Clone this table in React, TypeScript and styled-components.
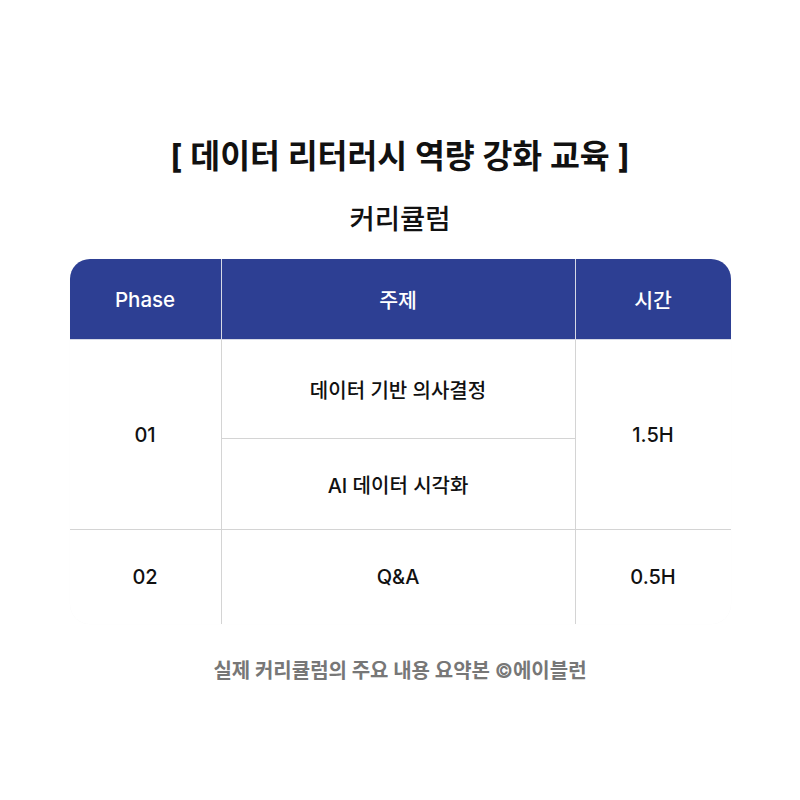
import React from 'react'
import styled, { createGlobalStyle } from 'styled-components'

const GlobalStyle = createGlobalStyle`
  html, body {
    margin: 0;
    padding: 0;
    background: #ffffff;
  }
  body {
    font-family: Inter, "Noto Sans CJK KR", sans-serif;
    color: #111;
  }
`

const Page = styled.div`
  width: 800px;
  height: 800px;
  display: flex;
  flex-direction: column;
  align-items: center;
  padding-top: 134px;
  box-sizing: border-box;
`

const Title = styled.h1`
  margin: 0;
  font-size: 32.5px;
  font-weight: 700;
  line-height: 46px;
  color: #111;
`

const Subtitle = styled.h2`
  margin: 20px 0 0;
  font-size: 27.5px;
  font-weight: 500;
  line-height: 38px;
  color: #111;
`

const Table = styled.div`
  margin-top: 21px;
  width: 661px;
  display: grid;
  grid-template-columns: 152px 354px 155px;
  border-radius: 20px;
  overflow: hidden;
  box-shadow: 0 0 1px rgba(0, 0, 0, 0.04);
`

const HeadCell = styled.div<{ $last?: boolean }>`
  height: 81px;
  display: flex;
  align-items: center;
  justify-content: center;
  background: #2d3f93;
  color: #fff;
  font-size: 20.5px;
  font-weight: 500;
  border-right: ${p => (p.$last ? 'none' : '1px solid #d6d9e6')};
  border-bottom: 1px solid #d6d9e6;
  box-sizing: border-box;
`

const Cell = styled.div<{ $rows?: number; $right?: boolean; $bottom?: boolean; $height?: number }>`
  grid-row: span ${p => p.$rows ?? 1};
  height: ${p => (p.$height ? `${p.$height}px` : 'auto')};
  display: flex;
  align-items: center;
  justify-content: center;
  font-size: 20px;
  font-weight: 500;
  color: #111;
  border-right: ${p => (p.$right ? '1px solid #d4d4d4' : 'none')};
  border-bottom: ${p => (p.$bottom ? '1px solid #d4d4d4' : 'none')};
  box-sizing: border-box;
`

const Footer = styled.p`
  margin: 31px 0 0;
  font-size: 20px;
  font-weight: 700;
  color: #777;
`

const App = () => {
  return (
    <>
      <GlobalStyle />
      <Page>
        <Title>[ 데이터 리터러시 역량 강화 교육 ]</Title>
        <Subtitle>커리큘럼</Subtitle>
        <Table>
          <HeadCell>Phase</HeadCell>
          <HeadCell>주제</HeadCell>
          <HeadCell $last>시간</HeadCell>

          <Cell $rows={2} $right $bottom>01</Cell>
          <Cell $right $bottom $height={99}>데이터 기반 의사결정</Cell>
          <Cell $rows={2} $bottom>1.5H</Cell>
          <Cell $right $bottom $height={91}>AI 데이터 시각화</Cell>

          <Cell $right $height={94}>02</Cell>
          <Cell $right $height={94}>Q&amp;A</Cell>
          <Cell $height={94}>0.5H</Cell>
        </Table>
        <Footer>실제 커리큘럼의 주요 내용 요약본 ©에이블런</Footer>
      </Page>
    </>
  )
}

export default App
